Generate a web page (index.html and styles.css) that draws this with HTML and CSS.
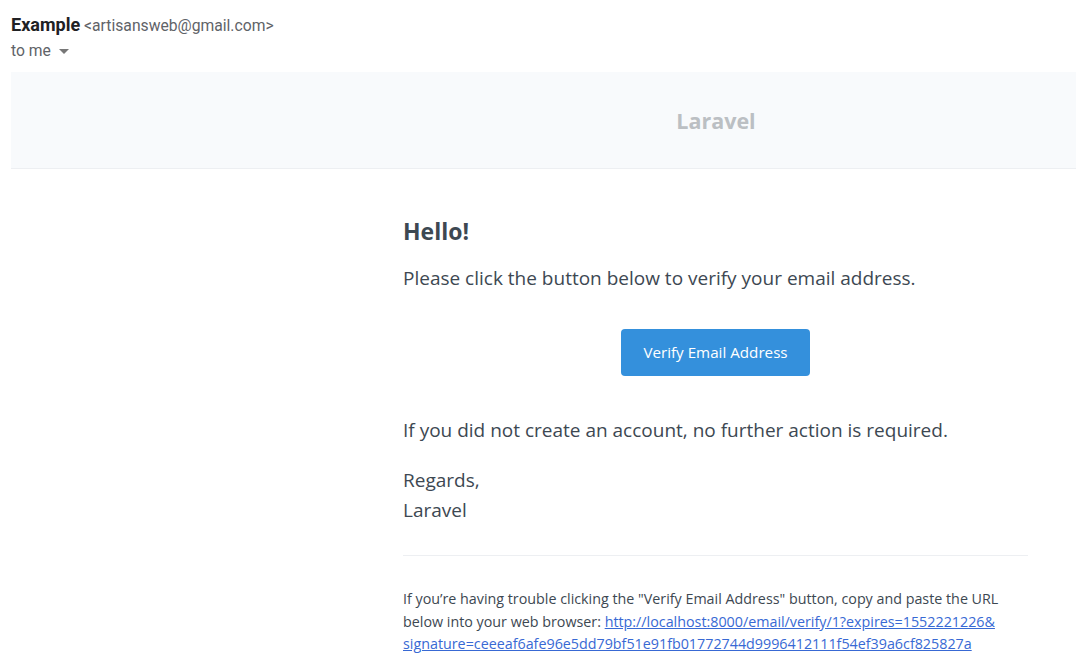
FILE: index.html
```html
<!DOCTYPE html>
<html lang="en">
<head>
    <meta charset="UTF-8">
    <meta name="viewport" content="width=device-width, initial-scale=1.0">
    <title>Verify Email Address</title>
    <link rel="stylesheet" href="styles.css">
</head>
<body>
  <div class="mailHead">
    <div class="sender">
      <span class="senderName">Example</span>
      <span class="senderAddr">&lt;artisansweb@gmail.com&gt;</span>
    </div>
    <div class="recipient">
      to me
      <span class="caret"></span>
    </div>
  </div>

  <div class="mail">
    <div class="brand">
      <span>Laravel</span>
    </div>

    <div class="content">
      <h1>Hello!</h1>
      <p>Please click the button below to verify your email address.</p>
      <div class="action">
        <a class="button" href="#">Verify Email Address</a>
      </div>
      <p>If you did not create an account, no further action is required.</p>
      <p class="salutation">Regards,<br>Laravel</p>

      <div class="subcopy">
        <p>If you’re having trouble clicking the "Verify Email Address" button, copy and paste the URL below into your web browser: <a href="#"><span class="nobreak">http://localhost:8000/email/verify/1?expires=1552221226&amp;</span><wbr><span class="nobreak">signature=ceeeaf6afe96e5dd79bf51e91fb01772744d9996412111f54ef39a6cf825827a</span></a></p>
      </div>
    </div>
  </div>
</body>
</html>
```

FILE: styles.css
```css
body {
  margin: 0;
  background: #fff;
}
.mailHead {
  padding: 14px 0 0 11px;
  height: 57px;
  box-sizing: border-box;
  font-family: Roboto, Arial, sans-serif;
}
.sender {
  line-height: 22px;
}
.senderName {
  font-weight: bold;
  font-size: 18px;
  color: #202124;
}
.senderAddr {
  font-size: 15.7px;
  color: #5f6368;
}
.recipient {
  margin-top: 3px;
  font-size: 15.7px;
  line-height: 22px;
  color: #5f6368;
  display: flex;
  align-items: center;
}
.caret {
  margin-left: 8px;
  border-left: 5px solid transparent;
  border-right: 5px solid transparent;
  border-top: 5px solid #777;
}
.mail {
  margin-left: 11px;
  font-family: "Open Sans", "Noto Sans", sans-serif;
  color: #3d4852;
}
.brand {
  background: #f8fafc;
  border-bottom: 1px solid #edeff2;
  height: 97px;
  display: flex;
  align-items: center;
  justify-content: center;
  padding-left: 345px;
  box-sizing: border-box;
  margin-top: 15px;
}
.brand span {
  font-weight: bold;
  font-size: 21.5px;
  color: #bbbfc3;
}
.content {
  width: 625px;
  margin-left: 392px;
  padding-top: 47px;
}
h1 {
  margin: 0 0 17px;
  font-size: 23px;
  line-height: 30px;
}
p {
  margin: 0 0 19px;
  font-size: 19px;
  line-height: 30px;
}
.salutation {
  margin-top: 20px;
}
.action {
  display: flex;
  justify-content: center;
  margin: 36px 0 39px;
}
.button {
  display: block;
  background: #3490dc;
  color: #fff;
  text-decoration: none;
  border-radius: 4px;
  padding: 0 22px;
  height: 47px;
  line-height: 47px;
  font-size: 15.2px;
}
.subcopy {
  border-top: 1px solid #edeff2;
  margin-top: 30px;
  padding-top: 32px;
}
.subcopy p {
  font-size: 14.3px;
  line-height: 22.5px;
}
.subcopy a {
  color: #3869d4;
}
.nobreak {
  white-space: nowrap;
}
```
